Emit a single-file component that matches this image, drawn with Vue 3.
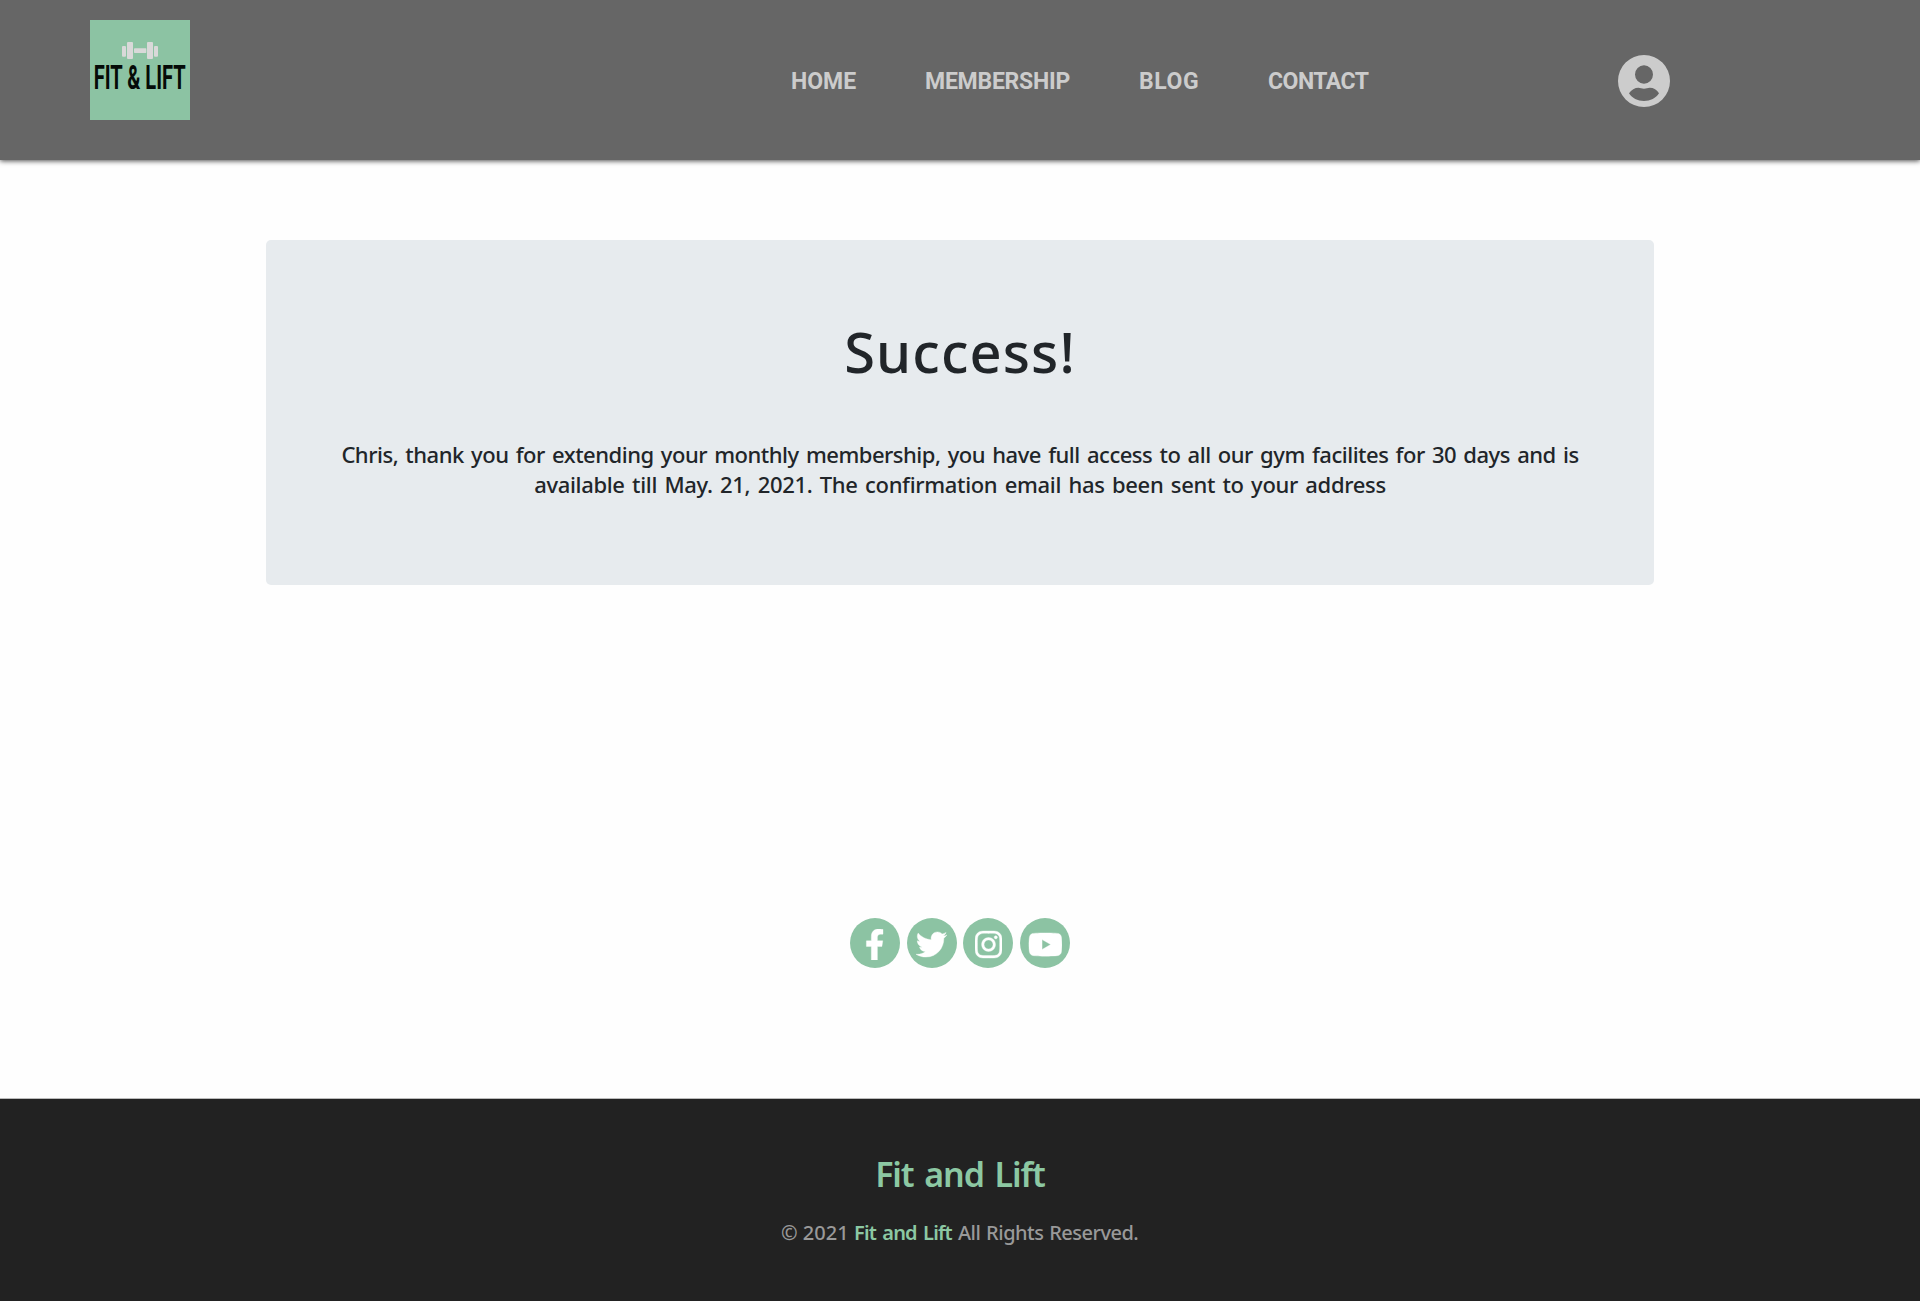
<script setup>
const links = [
  { label: 'HOME', cls: 'home' },
  { label: 'MEMBERSHIP', cls: 'membership' },
  { label: 'BLOG', cls: 'blog' },
  { label: 'CONTACT', cls: 'contact' }
]

const socials = [
  { name: 'Facebook', box: '0 0 320 512', w: 19.4, d: 'M279.14 288l14.22-92.66h-88.91v-60.13c0-25.35 12.42-50.06 52.24-50.06h40.42V6.26S260.43 0 225.36 0c-73.22 0-121.08 44.38-121.08 124.72v70.62H22.89V288h81.39v224h100.17V288z' },
  { name: 'Twitter', box: '0 0 512 512', w: 31, d: 'M459.37 151.716c.325 4.548.325 9.097.325 13.645 0 138.72-105.583 298.558-298.558 298.558-59.452 0-114.68-17.219-161.137-47.106 8.447.974 16.568 1.299 25.34 1.299 49.055 0 94.213-16.568 130.274-44.832-46.132-.975-84.792-31.188-98.112-72.772 6.498.974 12.995 1.624 19.818 1.624 9.421 0 18.843-1.3 27.614-3.573-48.081-9.747-84.143-51.98-84.143-102.985v-1.299c13.969 7.797 30.214 12.67 47.431 13.319-28.264-18.843-46.781-51.005-46.781-87.391 0-19.492 5.197-37.36 14.294-52.954 51.655 63.675 129.3 105.258 216.365 109.807-1.624-7.797-2.599-15.918-2.599-24.04 0-57.828 46.782-104.934 104.934-104.934 30.213 0 57.502 12.67 76.67 33.137 23.715-4.548 46.456-13.32 66.599-25.34-7.798 24.366-24.366 44.833-46.132 57.827 21.117-2.273 41.584-8.122 60.426-16.243-14.292 20.791-32.161 39.308-52.628 54.253z' },
  { name: 'Instagram', box: '0 0 448 512', w: 27.1, d: 'M224.1 141c-63.6 0-114.9 51.3-114.9 114.9s51.3 114.9 114.9 114.9S339 319.5 339 255.9 287.7 141 224.1 141zm0 189.6c-41.1 0-74.7-33.5-74.7-74.7s33.5-74.7 74.7-74.7 74.7 33.5 74.7 74.7-33.6 74.7-74.7 74.7zm146.4-194.3c0 14.9-12 26.8-26.8 26.8-14.9 0-26.8-12-26.8-26.8s12-26.8 26.8-26.8 26.8 12 26.8 26.8zm76.1 27.2c-1.7-35.9-9.9-67.7-36.2-93.9-26.2-26.2-58-34.4-93.9-36.2-37-2.1-147.9-2.1-184.9 0-35.8 1.7-67.6 9.9-93.9 36.1s-34.4 58-36.2 93.9c-2.1 37-2.1 147.9 0 184.9 1.7 35.9 9.9 67.7 36.2 93.9s58 34.4 93.9 36.2c37 2.1 147.9 2.1 184.9 0 35.9-1.7 67.7-9.9 93.9-36.2 26.2-26.2 34.4-58 36.2-93.9 2.1-37 2.1-147.8 0-184.8zM398.8 388c-7.8 19.6-22.9 34.7-42.6 42.6-29.5 11.7-99.5 9-132.1 9s-102.7 2.6-132.1-9c-19.6-7.8-34.7-22.9-42.6-42.6-11.7-29.5-9-99.5-9-132.1s-2.6-102.7 9-132.1c7.8-19.6 22.9-34.7 42.6-42.6 29.5-11.7 99.5-9 132.1-9s102.7-2.6 132.1 9c19.6 7.8 34.7 22.9 42.6 42.6 11.7 29.5 9 99.5 9 132.1s2.7 102.7-9 132.1z' },
  { name: 'YouTube', box: '0 0 576 512', w: 34.9, d: 'M549.655 124.083c-6.281-23.65-24.787-42.276-48.284-48.597C458.781 64 288 64 288 64S117.22 64 74.629 75.486c-23.497 6.322-42.003 24.947-48.284 48.597-11.412 42.867-11.412 132.305-11.412 132.305s0 89.438 11.412 132.305c6.281 23.65 24.787 41.5 48.284 47.821C117.22 448 288 448 288 448s170.78 0 213.371-11.486c23.497-6.321 42.003-24.171 48.284-47.821 11.412-42.867 11.412-132.305 11.412-132.305s0-89.438-11.412-132.305zm-317.51 213.508V175.185l142.739 81.205-142.739 81.201z' }
]
</script>

<template>
  <div class="page">
    <header class="header">
      <svg class="logo" viewBox="0 0 300 300" role="img" aria-label="Fit and Lift">
        <rect width="300" height="300" fill="#8cc3a3" />
        <g fill="#d9d9d9">
          <rect x="96" y="78" width="12" height="32" rx="3" />
          <rect x="111" y="66" width="18" height="51" rx="3" />
          <rect x="132" y="85" width="37" height="14" rx="2" />
          <rect x="171" y="66" width="18" height="51" rx="3" />
          <rect x="192" y="78" width="12" height="32" rx="3" />
        </g>
        <text class="logo-text" transform="translate(11 206) scale(.63 1)" textLength="438" lengthAdjust="spacingAndGlyphs">FIT &amp; LIFT</text>
      </svg>
      <nav class="nav">
        <a v-for="l in links" :key="l.label" :class="l.cls">{{ l.label }}</a>
      </nav>
      <svg class="account" viewBox="0 0 156 156" role="img" aria-label="Account">
        <path fill="#ccc" fill-rule="evenodd" d="M78 0a78 78 0 1 0 0 156a78 78 0 1 0 0-156zM78 31a27 27.5 0 1 1 0 55a27 27.5 0 1 1 0-55zM33 115C40 104 51 98 61 98C67 98 71 101 78 101C85 101 89 98 95 98C107 98 117 104 123 115C114 130 97 138 78 138C59 138 42 130 33 115z" />
      </svg>
    </header>

    <main class="main">
      <section class="card">
        <h1>Success!</h1>
        <p>
          <span class="line first">Chris, thank you for extending your monthly membership, you have full access to all our gym facilites for 30 days and is</span>
          <span class="line second">available till May. 21, 2021. The confirmation email has been sent to your address</span>
        </p>
      </section>
      <div class="socials">
        <a v-for="s in socials" :key="s.name" :aria-label="s.name">
          <svg :viewBox="s.box" :width="s.w" height="31"><path :d="s.d" /></svg>
        </a>
      </div>
    </main>

    <footer class="footer">
      <h2>Fit and Lift</h2>
      <p><span class="year">© 2021</span><span class="brand">Fit and Lift</span><span class="rights">All Rights Reserved.</span></p>
    </footer>
  </div>
</template>

<style>
body { margin: 0; background: #fefefe; }
</style>

<style scoped>
.page {
  display: flex;
  flex-direction: column;
  height: 1301px;
  overflow: hidden;
  font-family: "Noto Sans", sans-serif;
  font-weight: 500;
  color: #212529;
}
.header {
  display: flex;
  align-items: flex-start;
  box-sizing: border-box;
  height: 160px;
  flex: none;
  padding-left: 90px;
  background: #666;
  box-shadow: 0 1px 5px rgba(0, 0, 0, .7);
}
.logo { width: 100px; height: 100px; margin-top: 20px; }
.logo-text { font: 700 97px Roboto, sans-serif; fill: #050b08; }
.nav {
  display: flex;
  gap: 69px;
  width: 827px;
  margin: 67px 0 0 601px;
  font: 700 23px/30px Roboto, sans-serif;
  color: #ccc;
}
.home { width: 65px; letter-spacing: 0; }
.membership { width: 145px; letter-spacing: -.25px; }
.blog { width: 60px; letter-spacing: .6px; }
.contact { width: 102px; letter-spacing: -.5px; }
.account { width: 52px; height: 52px; margin-top: 55px; }
.main {
  display: flex;
  flex-direction: column;
  align-items: center;
  height: 938px;
  flex: none;
}
.card {
  box-sizing: border-box;
  width: 1388px;
  height: 345px;
  margin-top: 80px;
  padding-top: 77px;
  border-radius: 5px;
  background: #e7ebee;
  text-align: center;
}
h1 {
  margin: 0 0 54px;
  font-size: 56px;
  font-weight: 500;
  line-height: 68px;
  letter-spacing: 1.1px;
}
.card p { margin: 0; font-size: 22px; line-height: 30px; }
.line { display: block; white-space: nowrap; word-spacing: 2px; }
.first { letter-spacing: -.49px; }
.second { letter-spacing: -.32px; }
.socials { display: flex; gap: 6.7px; margin-top: 332.5px; }
.socials a {
  display: flex;
  align-items: center;
  justify-content: center;
  box-sizing: border-box;
  width: 50px;
  height: 50px;
  padding-top: 3.5px;
  border-radius: 50%;
  background: #8cc3a3;
}
.socials path { fill: #fff; stroke: #fff; stroke-width: 6px; }
.footer {
  box-sizing: border-box;
  height: 203px;
  flex: none;
  padding-top: 55px;
  border-top: 1px solid #bbb;
  background: #222;
  text-align: center;
}
h2 {
  margin: 0 0 24px;
  font-size: 34px;
  font-weight: 600;
  line-height: 40px;
  letter-spacing: -1.1px;
  word-spacing: 3px;
  color: #8cc8a3;
}
.footer p {
  display: flex;
  justify-content: center;
  margin: 0;
  font-size: 20px;
  line-height: 30px;
  color: #999;
  white-space: nowrap;
}
.year { width: 73px; text-align: left; }
.brand { width: 104px; text-align: left; letter-spacing: -.85px; word-spacing: 2px; font-weight: 600; color: #8cc8a3; }
.rights { width: 181px; text-align: left; letter-spacing: -.5px; word-spacing: 1px; }
</style>
